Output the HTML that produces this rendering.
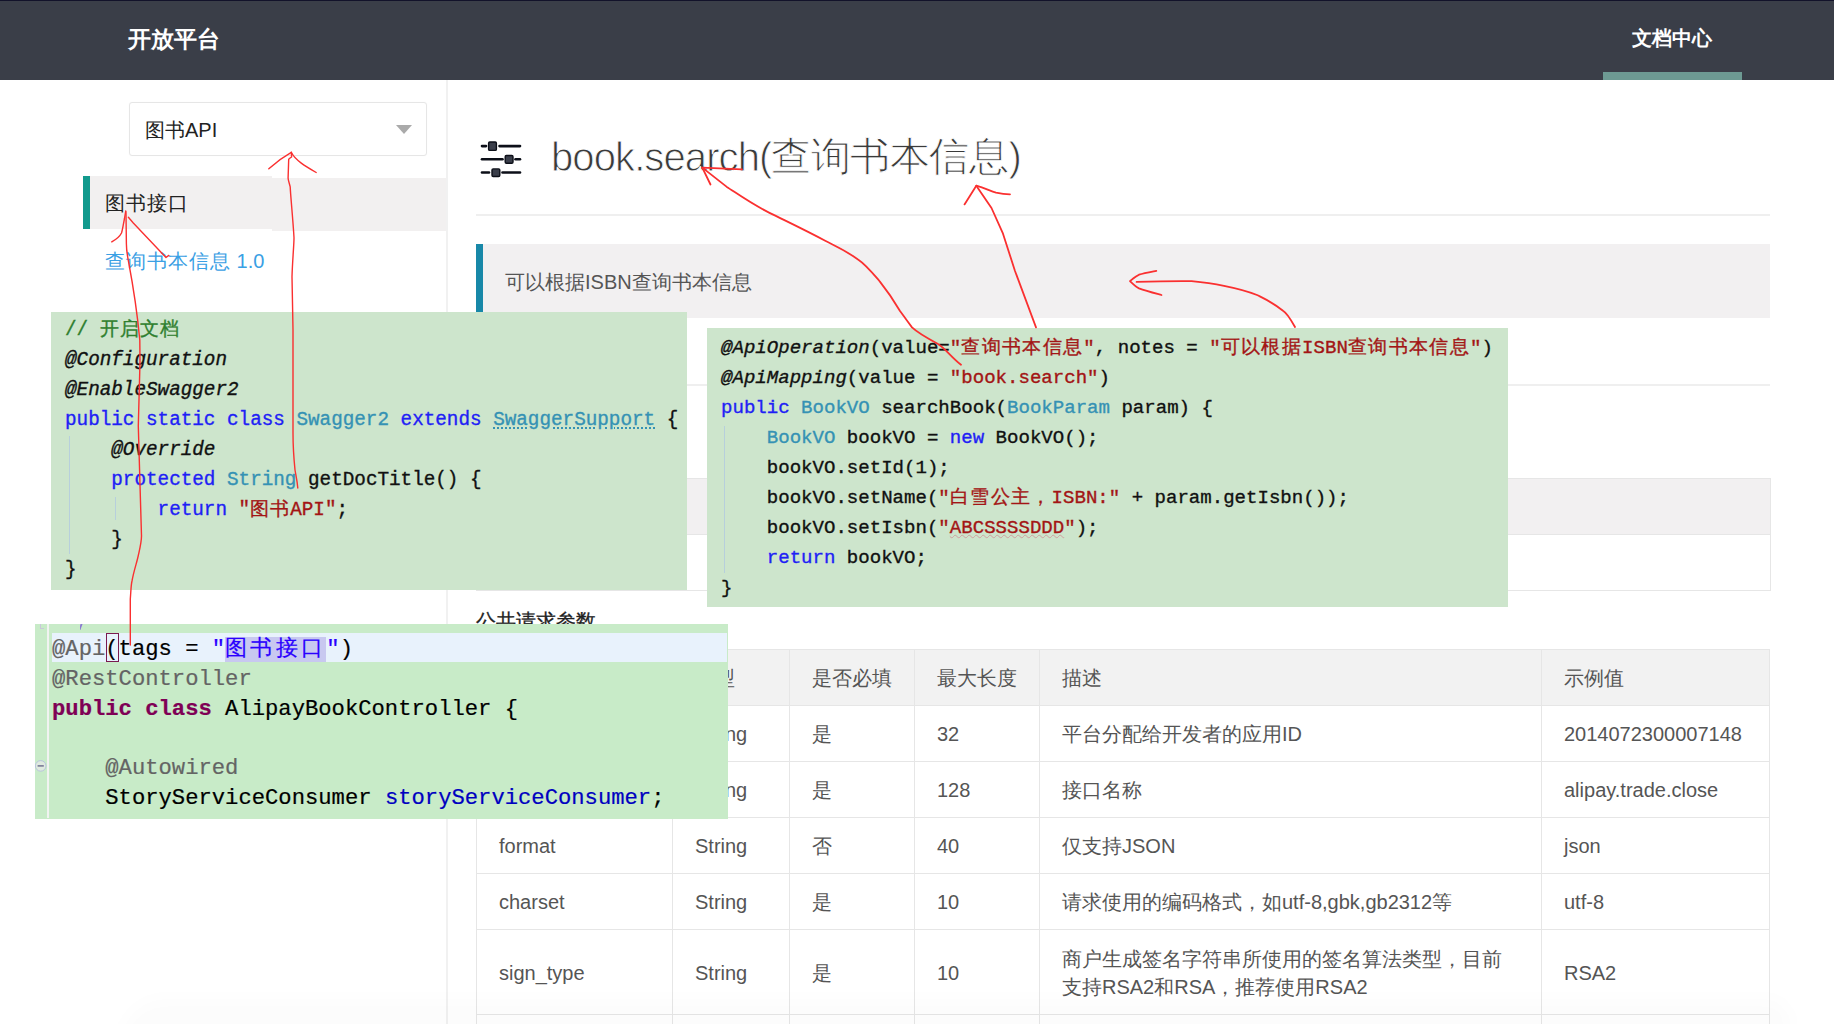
<!DOCTYPE html>
<html><head><meta charset="utf-8">
<style>
*{margin:0;padding:0;box-sizing:border-box}
html,body{width:1834px;height:1024px;overflow:hidden;background:#fff}
body{position:relative;font-family:"Liberation Sans",sans-serif;color:#333}
.a{position:absolute}
#hdr{left:0;top:0;width:1834px;height:80px;background:#3a3e48;border-top:1px solid #12122a}
#logo{left:128px;top:24px;font-size:23px;font-weight:bold;color:#fff;white-space:nowrap}
#doc{left:1632px;top:25px;font-size:20px;font-weight:bold;color:#fff;white-space:nowrap}
#docbar{left:1603px;top:72px;width:139px;height:8px;background:#6d9a93}
#sbline{left:446px;top:80px;width:2px;height:944px;background:#f1f1f1}
#sel{left:129px;top:102px;width:298px;height:54px;border:1px solid #e6e6e6;border-radius:3px;box-shadow:0 0 1px #eee}
#seltxt{left:145px;top:117px;font-size:20px;color:#222;white-space:nowrap}
#caret{left:396px;top:125px;width:0;height:0;border-left:8px solid transparent;border-right:8px solid transparent;border-top:9px solid #aaa}
#menu{left:83px;top:176px;width:189px;height:53px;background:#f2f0f0;border-left:7px solid #129a8d}
#menu2{left:272px;top:178px;width:174px;height:53px;background:#f2f0f0}
#menutxt{left:105px;top:190px;font-size:20px;color:#222;white-space:nowrap}
#link{left:105px;top:248px;font-size:20px;color:#3aa0e4;white-space:nowrap}

#title{left:551px;top:130px;font-size:40px;color:#3a3a3a;-webkit-text-stroke:0.9px #fff;white-space:nowrap;font-weight:normal}
#hr1{left:476px;top:214px;width:1294px;height:2px;background:#efefef}
#desc{left:476px;top:244px;width:1294px;height:74px;background:#f2f0f1;border-left:7px solid #1888a8}
#desctxt{left:505px;top:269px;font-size:20px;color:#555;white-space:nowrap}
#hr2{left:476px;top:384px;width:1294px;height:2px;background:#efefef}
#gray2{left:476px;top:478px;width:1295px;height:57px;background:#f2f0f1;border:1px solid #e6e6e6}
#box2{left:476px;top:535px;width:1295px;height:56px;border:1px solid #e6e6e6;border-top:none}
#pubtitle{left:476px;top:607.5px;font-size:20px;color:#222;-webkit-text-stroke:0.3px #222;white-space:nowrap}
table#t{position:absolute;left:476px;top:649px;border-collapse:collapse;font-size:20px;color:#555}
#t td{border:1px solid #e6e6e6;padding:2px 0 0 22px;height:56px;vertical-align:middle;white-space:nowrap}
#t tr.h td{background:#f2f2f2}
.code{font-family:"Liberation Mono",monospace;white-space:pre;color:#111}
#cb1{left:51px;top:312px;width:636px;height:278px;background:#cde5cc}
#cb2{left:707px;top:328px;width:801px;height:279px;background:#cde5cc}
#cb3{left:35px;top:624px;width:693px;height:195px;background:#c8ebc8}
.ln{position:absolute;left:0;height:30px;line-height:30px}
#cb1 .ln{left:14px;font-size:19.3px;margin-top:1px}
#cb1 .cj{letter-spacing:1px}
#cb2 .cj{letter-spacing:1.35px}
#cb3 .cj{letter-spacing:3.3px}
.code{-webkit-text-stroke:0.35px currentColor}
#cb3{-webkit-text-stroke:0.2px currentColor}
#cb2 .ln{left:14px;font-size:19.07px;margin-top:1px}
.ln i{font-style:italic}
.cm{color:#2f7f2f}
.kw{color:#1f1ff5}
.ty{color:#3592b4}
.st{color:#a31515}
.du{text-decoration:underline dotted #3592b4;text-underline-offset:3px}
.wv{text-decoration:underline wavy #d0a0a0 1px}
.g{position:absolute;width:1px;background:#b7cfdc}
.ln3{position:absolute;left:17px;height:30px;line-height:30px;font-size:22.2px;color:#000;margin-top:2px}
.ann{color:#646464}
.kw3{color:#7f0055}
.st3{color:#2a00ff}
.sel{background:#c8c8f0}
.fld{color:#0000c0}
#gut{position:absolute;left:11.5px;top:0;width:2.5px;height:194px;background:#f1f3f1}
#hl{position:absolute;left:17px;top:9px;width:675px;height:29px;background:#e8f2fc}
#cur{position:absolute;left:71px;top:9px;width:12.5px;height:29px;border:1.2px solid #7a1a50}
svg#arrows{position:absolute;left:0;top:0}
</style></head><body>
<div id="hdr" class="a"></div>
<div id="logo" class="a">开放平台</div>
<div id="doc" class="a">文档中心</div>
<div id="docbar" class="a"></div>
<div id="sbline" class="a"></div>
<div id="sel" class="a"></div>
<div id="seltxt" class="a">图书API</div>
<div id="caret" class="a"></div>
<div id="menu2" class="a"></div><div id="menu" class="a"></div>
<div id="menutxt" class="a" style="letter-spacing:1px">图书接口</div>
<div id="link" class="a"><span style="letter-spacing:1px">查询书本信息</span> 1.0</div>
<svg id="icon" class="a" width="65" height="55" viewBox="0 0 65 55" style="left:470px;top:130px">
<g stroke="#0c0f18" stroke-width="2.6" stroke-linecap="round">
<line x1="12" y1="16.1" x2="16" y2="16.1"/><line x1="29.5" y1="16.1" x2="50" y2="16.1"/>
<line x1="12" y1="29.3" x2="32.5" y2="29.3"/><line x1="45.5" y1="29.3" x2="50" y2="29.3"/>
<line x1="12" y1="42.5" x2="19" y2="42.5"/><line x1="32.5" y1="42.5" x2="50" y2="42.5"/>
</g>
<g fill="#3a3e4a" stroke="#0c0f18" stroke-width="1.4">
<rect x="18.6" y="12" width="7.8" height="8.4" rx="1.2"/>
<rect x="35.2" y="25.5" width="7.8" height="7.8" rx="1.2"/>
<rect x="22" y="38.9" width="7.8" height="7.6" rx="1.2"/>
</g>
</svg>
<div id="title" class="a"><span style="letter-spacing:-0.9px">book.search(</span><span style="letter-spacing:-0.5px;position:relative;top:-1px">查询书本信息</span>)</div>
<div id="hr1" class="a"></div>
<div id="desc" class="a"></div>
<div id="desctxt" class="a">可以根据ISBN查询书本信息</div>
<div id="hr2" class="a"></div>
<div id="gray2" class="a"></div>
<div id="box2" class="a"></div>
<div id="pubtitle" class="a">公共请求参数</div>
<table id="t">
<tr class="h"><td style="width:196px">参数</td><td style="width:117px">类型</td><td style="width:125px">是否必填</td><td style="width:125px">最大长度</td><td style="width:502px">描述</td><td style="width:228px">示例值</td></tr>
<tr><td>app_id</td><td>String</td><td>是</td><td>32</td><td>平台分配给开发者的应用ID</td><td>2014072300007148</td></tr>
<tr><td>method</td><td>String</td><td>是</td><td>128</td><td>接口名称</td><td>alipay.trade.close</td></tr>
<tr><td>format</td><td>String</td><td>否</td><td>40</td><td>仅支持JSON</td><td>json</td></tr>
<tr><td>charset</td><td>String</td><td>是</td><td>10</td><td>请求使用的编码格式，如utf-8,gbk,gb2312等</td><td>utf-8</td></tr>
<tr><td style="height:85px">sign_type</td><td>String</td><td>是</td><td>10</td><td style="line-height:28px">商户生成签名字符串所使用的签名算法类型，目前<br>支持RSA2和RSA，推荐使用RSA2</td><td>RSA2</td></tr>
<tr><td>sign</td><td>String</td><td>是</td><td>344</td><td>商户请求参数的签名串</td><td>详见示例</td></tr>
</table>

<div class="a" style="left:120px;top:999px;width:1670px;height:45px;background:rgba(0,0,0,0.013);filter:blur(8px);border-radius:60px 30px 0 0"></div>
<div id="cb1" class="a code">
<div class="ln" style="top:2px"><span class="cm">// <span class="cj">开启文档</span></span></div>
<div class="ln" style="top:32px"><i>@Configuration</i></div>
<div class="ln" style="top:62px"><i>@EnableSwagger2</i></div>
<div class="ln" style="top:92px"><span class="kw">public static class</span> <span class="ty">Swagger2</span> <span class="kw">extends</span> <span class="ty du">SwaggerSupport</span> {</div>
<div class="ln" style="top:122px">    <i>@Override</i></div>
<div class="ln" style="top:152px">    <span class="kw">protected</span> <span class="ty">String</span> getDocTitle() {</div>
<div class="ln" style="top:182px">        <span class="kw">return</span> <span class="st">"<span class="cj">图书</span>API"</span>;</div>
<div class="ln" style="top:212px">    }</div>
<div class="ln" style="top:242px">}</div>
<div class="g" style="left:18px;top:124px;height:118px"></div>
<div class="g" style="left:64px;top:185px;height:23px"></div>
</div>
<div id="cb2" class="a code">
<div class="ln" style="top:4px"><i>@ApiOperation</i>(value=<span class="st">"<span class="cj">查询书本信息</span>"</span>, notes = <span class="st">"<span class="cj">可以根据</span>ISBN<span class="cj">查询书本信息</span>"</span>)</div>
<div class="ln" style="top:34px"><i>@ApiMapping</i>(value = <span class="st">"book.search"</span>)</div>
<div class="ln" style="top:64px"><span class="kw">public</span> <span class="ty">BookVO</span> searchBook(<span class="ty">BookParam</span> param) {</div>
<div class="ln" style="top:94px">    <span class="ty">BookVO</span> bookVO = <span class="kw">new</span> BookVO();</div>
<div class="ln" style="top:124px">    bookVO.setId(1);</div>
<div class="ln" style="top:154px">    bookVO.setName(<span class="st">"<span class="cj">白雪公主，</span>ISBN:"</span> + param.getIsbn());</div>
<div class="ln" style="top:184px">    bookVO.setIsbn(<span class="st">"<span class="wv">ABCSSSSDDD</span>"</span>);</div>
<div class="ln" style="top:214px">    <span class="kw">return</span> bookVO;</div>
<div class="ln" style="top:244px">}</div>
<div class="g" style="left:17px;top:98px;height:147px"></div>
</div>
<div id="cb3" class="a code">
<div id="gut"></div>
<div id="hl"></div>
<div style="position:absolute;left:45px;top:0;width:6px;height:6px;overflow:hidden"><div style="position:absolute;left:0;top:-3px;width:4px;height:9px;border-left:2px solid #8a7ad0;transform:skewX(-20deg)"></div></div>
<div style="position:absolute;left:5px;top:0;width:4px;height:5px;border-left:1px solid #c8c8d8;border-bottom:1px solid #c8c8d8"></div>
<svg style="position:absolute;left:0;top:135px" width="12" height="14"><circle cx="5.7" cy="6.9" r="5.3" fill="#dfeadf" stroke="#b8c4dc" stroke-width="1"/><line x1="2.6" y1="6.9" x2="8.8" y2="6.9" stroke="#6a6a8c" stroke-width="1.4"/></svg>
<div id="cur"></div>
<div class="ln3" style="top:9px"><span class="ann">@Api</span>(tags = <span class="st3">"<span class="sel cj">图书接口</span>"</span>)</div>
<div class="ln3" style="top:39px"><span class="ann">@RestController</span></div>
<div class="ln3" style="top:69px"><b class="kw3">public class</b> AlipayBookController {</div>
<div class="ln3" style="top:128px">    <span class="ann">@Autowired</span></div>
<div class="ln3" style="top:158px">    StoryServiceConsumer <span class="fld">storyServiceConsumer</span>;</div>
</div>

<svg id="arrows" width="1834" height="1024" fill="none" stroke="#fa3030" stroke-width="1.8" stroke-linecap="round" stroke-linejoin="round">
<path stroke-width="1.4" d="M130.3,645 L130.3,599 C131,590 131,585 132,581 C134,570 137,562 138.3,555.5 C140,548 141.5,542 141.5,536 L138.3,426 L140,362 L139.8,340 C137,310 132,280 128.6,262 C127,254 126.4,250 126.4,244 L126,213.4 L125.7,211.3"/>
<path stroke-width="1.4" d="M125.7,211.3 L124.4,219 C123,226 122.5,230 121.5,233 C119,238 115,240 111.7,241.8"/>
<path stroke-width="1.4" d="M128.4,217.3 L133.3,223 L166,257.5 L168.8,255.4"/>
<path stroke-width="1.4" d="M297.8,488 C297,480 296,476 295,470 C293,450 293,440 293,433 L293,330 C292.5,300 292,285 292,276.7 C292.5,260 294,245 294,237.7 C293,220 290.5,195 290.2,186.9 C289,182 288.1,180 288.1,178 L288.7,159.3 C290,158 291.6,157 291.6,157 L291.3,152.3"/>
<path stroke-width="1.4" d="M268.8,168.7 C275,163 283,157 291.3,152.3 C295,160 305,166 316.2,172.5"/>
<path d="M961,364.8 C950,356 945,348 937.6,343.7 C925,337 918,333 912,327.4 C905,318 903,315 900,311 C890,294 885,288 879,280.5 C870,270 865,264 858,259.5 C845,250 835,246 825.2,240.8 C805,230 790,223 769,212.6 C750,203 735,192 726.8,186.9 C718,180 708,172 702.3,167.6"/>
<path d="M742,169.3 L702.3,167.6 L710.5,184.5"/>
<path d="M1036,327.4 L1015,271 L1003,233.7 L991.5,208 L976.3,185.7"/>
<path d="M964.5,204.4 L976.3,185.7 C985,188 990,191 996,192.7 C1002,194 1006,194.3 1010,194.3"/>
<path d="M1295,327 C1290,318 1287,313 1283,310.7 C1272,302 1265,299 1257,295 C1245,290 1235,288 1224,285.8 C1210,283 1200,282 1191.6,281.2 C1170,281 1150,281.5 1136.6,281.9"/>
<path d="M1156.3,270.8 C1150,272 1144,273 1139,274.7 C1135,277 1132,279 1130,281.2 C1133,284 1136,287 1139,288.4 C1146,291 1154,293 1161.5,295"/>
</svg>
</body></html>
